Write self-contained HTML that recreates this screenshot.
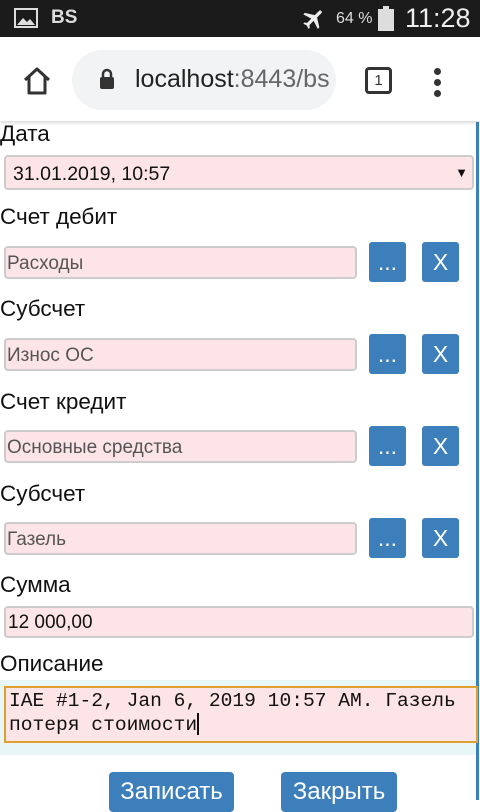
<!DOCTYPE html>
<html><head><meta charset="utf-8"><style>
*{box-sizing:border-box;margin:0;padding:0}
body{width:480px;height:800px;overflow:hidden;background:#fff;font-family:"Liberation Sans","Noto Sans CJK SC",sans-serif;position:relative}
.a{position:absolute}
.lbl{position:absolute;left:0;font-size:22.5px;color:#111}
.inp{position:absolute;left:4px;width:353px;height:33px;background:#fde4e6;border:2px solid #ccc;border-radius:4px;font-size:19px;color:#555;padding:5px 0 0 1px}
.btn{position:absolute;width:37px;height:40px;background:#3d7fbb;border-radius:3px;color:#fff;font-size:23px;text-align:center;line-height:40px}
</style></head><body>
<div class="a" style="left:0;top:0;width:480px;height:37px;background:#1b1b1b"></div>
<div class="a" style="left:14px;top:8px;width:24px;height:20px;border:2px solid #ddd"></div>
<svg class="a" style="left:16px;top:12px" width="20" height="14"><path d="M1 13 L7 6 L11 10 L14 7 L19 13Z" fill="#ddd"/></svg>
<div class="a" style="left:51px;top:7px;color:#ddd;font-size:19px;font-weight:bold">BS</div>
<svg class="a" style="left:300px;top:6px" width="28" height="26" viewBox="0 0 24 24"><path d="M21 16v-2l-8-5V3.5a1.5 1.5 0 0 0-3 0V9l-8 5v2l8-2.5V19l-2 1.5V22l3.5-1 3.5 1v-1.5L13 19v-5.5z" fill="#eee" transform="rotate(45 12 12)"/></svg>
<div class="a" style="left:336px;top:10px;color:#ddd;font-size:16px">64 %</div>
<div class="a" style="left:378px;top:9px;width:16px;height:22px;background:#ddd"></div>
<div class="a" style="left:383px;top:6px;width:6px;height:3px;background:#ddd"></div>
<div class="a" style="left:405px;top:3px;color:#eee;font-size:27px">11:28</div>
<div class="a" style="left:0;top:37px;width:480px;height:84px;background:#fff;box-shadow:0 2px 3px rgba(0,0,0,.15)"></div>
<svg class="a" style="left:22px;top:66px" width="30" height="30" viewBox="0 0 30 30"><path d="M3 14 L15 3 L27 14 M7 11 V27 H23 V11" fill="none" stroke="#333" stroke-width="3" stroke-linejoin="round"/></svg>
<div class="a" style="left:72px;top:50px;width:264px;height:60px;background:#f1f3f4;border-radius:30px"></div>
<svg class="a" style="left:99px;top:68px" width="16" height="22"><path d="M4 9 V6 a4 4 0 0 1 8 0 V9" fill="none" stroke="#333" stroke-width="2.5"/><rect x="1" y="9" width="14" height="12" rx="2" fill="#333"/></svg>
<div class="a" style="left:135px;top:65px;font-size:25px;color:#222;white-space:nowrap;width:200px;overflow:hidden">localhost<span style="color:#666">:8443/bs</span></div>
<div class="a" style="left:365px;top:67px;width:27px;height:27px;border:3px solid #333;border-radius:4px;font-size:15px;text-align:center;line-height:21px;color:#333">1</div>
<div class="a" style="left:434px;top:68px;width:7px;height:7px;border-radius:50%;background:#333"></div>
<div class="a" style="left:434px;top:79px;width:7px;height:7px;border-radius:50%;background:#333"></div>
<div class="a" style="left:434px;top:90px;width:7px;height:7px;border-radius:50%;background:#333"></div>
<div class="a" style="left:476px;top:122px;width:3px;height:678px;background:#3d7fbb"></div>

<div class="lbl" style="top:121px">Дата</div>
<div class="inp" style="top:155px;width:470px;height:35px;color:#111;padding:6px 0 0 7px;font-size:19.5px">31.01.2019, 10:57<span style="position:absolute;right:4px;top:8px;font-size:13px">▼</span></div>

<div class="lbl" style="top:204px">Счет дебит</div>
<div class="inp" style="top:246px">Расходы</div>
<div class="btn" style="left:369px;top:242px">...</div><div class="btn" style="left:422px;top:242px">X</div>

<div class="lbl" style="top:296px">Субсчет</div>
<div class="inp" style="top:338px">Износ ОС</div>
<div class="btn" style="left:369px;top:334px">...</div><div class="btn" style="left:422px;top:334px">X</div>

<div class="lbl" style="top:389px">Счет кредит</div>
<div class="inp" style="top:430px">Основные средства</div>
<div class="btn" style="left:369px;top:426px">...</div><div class="btn" style="left:422px;top:426px">X</div>

<div class="lbl" style="top:481px">Субсчет</div>
<div class="inp" style="top:522px">Газель</div>
<div class="btn" style="left:369px;top:518px">...</div><div class="btn" style="left:422px;top:518px">X</div>

<div class="lbl" style="top:572px">Сумма</div>
<div class="inp" style="top:606px;width:470px;height:32px;color:#111;padding:4px 0 0 2px">12 000,00</div>

<div class="lbl" style="top:651px">Описание</div>
<div class="a" style="left:0;top:680px;width:476px;height:75px;background:#e8f6f8"></div>
<div class="a" style="left:4px;top:686px;width:474px;height:57px;background:#fde4e6;border:2px solid #e0a030;font-family:'Liberation Mono','DejaVu Sans Mono',monospace;font-size:19.6px;line-height:24px;padding:1px 0 0 3px;color:#111;white-space:nowrap">IAE #1-2, Jan 6, 2019 10:57 AM. Газель<br>потеря стоимости<span style="display:inline-block;width:1.5px;height:22px;background:#111;vertical-align:-5px"></span></div>

<div class="a" style="left:109px;top:772px;width:125px;height:40px;background:#3d7fbb;border-radius:4px;color:#fff;font-size:24px;text-align:center;padding-top:6px">Записать</div>
<div class="a" style="left:281px;top:772px;width:116px;height:40px;background:#3d7fbb;border-radius:4px;color:#fff;font-size:24px;text-align:center;padding-top:6px">Закрыть</div>
</body></html>
